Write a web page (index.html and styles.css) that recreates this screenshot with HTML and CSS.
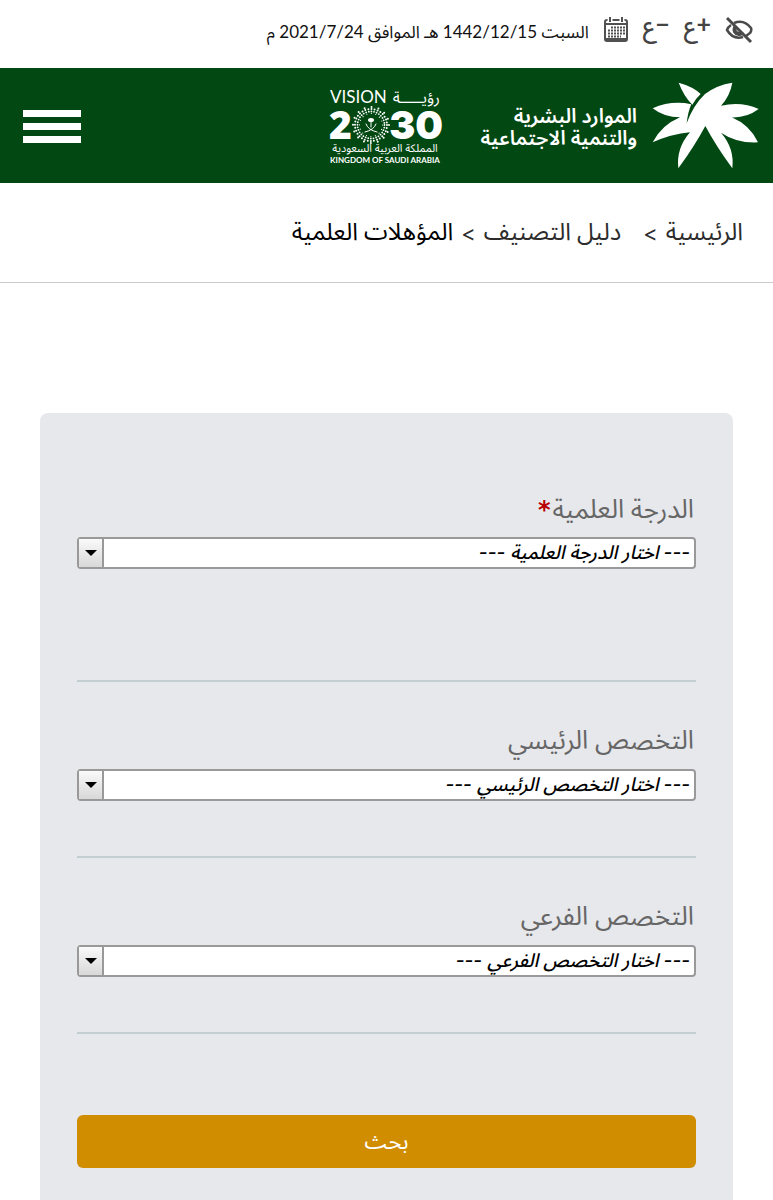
FILE: index.html
```html
<!DOCTYPE html>
<html lang="ar" dir="rtl">
<head>
<meta charset="utf-8">
<meta name="viewport" content="width=device-width, initial-scale=1">
<title>المؤهلات العلمية</title>
<link rel="stylesheet" href="styles.css">
</head>
<body>
<div class="topbar">
  <button class="tool" type="button" aria-label="وضع القراءة">
    <svg width="28" height="28" viewBox="0 0 28 28" fill="none" stroke="#4a4a4a" stroke-width="2.500">
      <path d="M9 7Q19 3 26 12Q27 14 25 17L21 20M6 9Q3 11 2 14Q8 24 18 21"/>
      <path d="M10 11Q8 17 14 18Q16 18 17 16" stroke-width="4"/>
      <path d="M2 2L26 26" stroke-width="3"/>
    </svg>
  </button>
  <button class="tool letter" type="button"><span>ع</span><sup>+</sup></button>
  <button class="tool letter" type="button"><span>ع</span><sup>−</sup></button>
  <button class="tool" type="button" aria-label="التقويم">
    <svg width="26" height="26" viewBox="0 0 26 26" fill="none" stroke="#505050">
      <rect x="2" y="3" width="22" height="21" rx="2" stroke-width="2"/>
      <path d="M2 7H24M2 22H24" stroke-width="2"/>
      <path d="M7 0V5M19 0V5" stroke="#fff" stroke-width="5"/>
      <path d="M7 0V5M19 0V5" stroke-width="2"/>
      <path d="M8 10.500H22M5 13.500H22M5 16.500H22M5 19.500H18" stroke-width="2" stroke-dasharray="2 1"/>
    </svg>
  </button>
  <span class="date">السبت 1442/12/15 هـ الموافق 2021/7/24 م</span>
</div>

<header class="header">
  <a class="ministry" href="#">
    <svg width="107" height="87" viewBox="576 36 321 261" fill="#fff" aria-hidden="true">
      <path d="M656 38Q700 50 722 72Q705 88 697 104Q672 80 656 38Z"/>
      <path d="M817 38Q810 78 783 107Q845 94 896 117Q860 144 815 142Q870 165 894 217Q830 220 783 188Q824 235 817 295Q768 228 736 168Q704 228 655 295Q648 235 690 187Q635 192 578 217Q605 165 660 142Q612 142 578 115Q635 90 694 103Q684 125 680 160Q700 105 735 72Q770 45 817 38Z"/>
    </svg>
    <span class="ministry-name">الموارد البشرية<br>والتنمية الاجتماعية</span>
  </a>
  <a class="vision" href="#">
    <svg width="116" height="96" viewBox="0 -8 116 96" fill="#fff" direction="ltr">
      <text class="v-thin" x="2" y="17">VISION</text>
      <text class="v-ar" x="112" y="17" text-anchor="end">رؤيـــــة</text>
      <text class="v-two" x="1" y="53">2</text>
      <text class="v-num" x="115" y="53" text-anchor="end">30</text>
      <g fill="none" stroke="#fff" stroke-linecap="round">
        <circle cx="43" cy="39" r="18" stroke-width="2" stroke-dasharray="0 7.069"/>
        <circle cx="43" cy="39" r="16" stroke-width="2" stroke-dasharray="0 3.142"/>
        <circle cx="43" cy="39" r="13.500" stroke-width="1.800" stroke-dasharray="0 2.651"/>
        <circle cx="43" cy="39" r="11.500" stroke-width="1.200" stroke-dasharray="0 4.516"/>
        <path d="M37 46Q46 44 48 38M49 46Q40 44 38 38" stroke-width="1"/>
        <path d="M43 41V34" stroke-width="1"/>
      </g>
      <ellipse cx="43" cy="34" rx="3" ry="2"/>
      <text class="v-sub-ar" x="57" y="66" text-anchor="middle">المملكة العربية السعودية</text>
      <text class="v-sub" x="57" y="77" text-anchor="middle">KINGDOM OF SAUDI ARABIA</text>
    </svg>
  </a>
  <button class="menu" type="button" aria-label="القائمة"><span></span><span></span><span></span></button>
</header>

<nav class="crumbs">
  <a href="#">الرئيسية</a><span class="sep wide">&gt;</span><a href="#">دليل التصنيف</a><span class="sep">&gt;</span><span class="current">المؤهلات العلمية</span>
</nav>

<main class="main">
  <form class="card">
    <div class="field tall">
      <label for="degree">الدرجة العلمية<span class="req">*</span></label>
      <div class="combo"><select id="degree"><option>--- اختار الدرجة العلمية ---</option></select><span class="arrow"></span></div>
    </div>
    <div class="field">
      <label for="major">التخصص الرئيسي</label>
      <div class="combo"><select id="major"><option>--- اختار التخصص الرئيسي ---</option></select><span class="arrow"></span></div>
    </div>
    <div class="field">
      <label for="minor">التخصص الفرعي</label>
      <div class="combo"><select id="minor"><option>--- اختار التخصص الفرعي ---</option></select><span class="arrow"></span></div>
    </div>
    <button class="search" type="button">بحث</button>
  </form>
</main>
</body>
</html>
```
FILE: styles.css
```css
* { box-sizing: border-box; }
body {
  margin: 0;
  background: #fff;
  color: #111;
  font-family: Lato, "Noto Sans Arabic", "DejaVu Sans", sans-serif;
}
button { font-family: inherit; border: 0; padding: 0; background: none; cursor: pointer; }
a { color: inherit; text-decoration: none; }
svg { display: block; }

.topbar {
  display: flex;
  align-items: center;
  gap: 14px;
  height: 68px;
  padding: 0 20px 8px;
}
.tool { color: #444; }
.letter { display: flex; direction: ltr; align-items: flex-start; height: 28px; }
.letter span { font-size: 24px; font-weight: 500; line-height: 20px; }
.letter sup { font-size: 25px; font-weight: 700; line-height: 14px; }
.date { font-size: 17px; line-height: 24px; padding-top: 4px; }

.header {
  display: flex;
  align-items: center;
  height: 115px;
  padding: 0 14px 0 23px;
  background: #014812;
  color: #fff;
}
.ministry { display: flex; align-items: center; gap: 15px; }
.ministry-name { font-size: 20px; font-weight: 600; line-height: 22px; white-space: nowrap; }
.vision { margin-right: 36px; }
.menu { display: grid; gap: 6px; width: 58px; margin-right: auto; padding-top: 2px; }
.menu span { height: 7px; background: #fff; }

.v-thin { font: 400 17px Lato, sans-serif; }
.v-ar { font: 16px "Noto Sans Arabic", "DejaVu Sans", sans-serif; }
.v-two { font: 800 39px "Open Sans", sans-serif; }
.v-num { font: 900 39px Inter, sans-serif; }
.v-sub-ar { font: 11px "Noto Sans Arabic", "DejaVu Sans", sans-serif; }
.v-sub { font: 700 8px Lato, sans-serif; }

.crumbs {
  display: flex;
  align-items: center;
  height: 100px;
  padding: 0 30px;
  border-bottom: 1px solid #ccc;
  font-size: 24px;
  color: #2c2c2c;
  white-space: nowrap;
}
.sep { margin: 0 8px; font-family: Inter, sans-serif; font-size: 22px; }
.sep.wide { margin-left: 22px; }
.current { color: #000; }

.main { padding: 130px 40px 0; }
.card {
  padding: 50px 37px 64px;
  border-radius: 8px;
  background: #e7e8ec;
}
.field {
  height: 176px;
  padding-top: 27px;
  border-bottom: 2px solid #c3ced3;
}
.field.tall { height: 219px; }
label { display: block; height: 60px; padding: 12px 2px 0; font-size: 26px; line-height: 36px; color: #666; }
.field.tall label { height: 47px; padding-top: 0; }
.req { color: #b80000; font-family: "DejaVu Sans", sans-serif; font-size: 24px; font-weight: 700; line-height: 24px; margin-right: 2px; }
.combo { position: relative; height: 32px; }
select {
  display: block;
  appearance: none;
  width: 100%;
  height: 32px;
  padding: 0 4px 0 30px;
  border: 2px solid #999;
  border-radius: 4px;
  background: #fff;
  color: #000;
  font: italic 500 19px/28px Inter, "Noto Sans Arabic", "DejaVu Sans", sans-serif;
}
.arrow {
  position: absolute;
  left: 2px;
  top: 2px;
  bottom: 2px;
  display: grid;
  place-items: center;
  width: 25px;
  border-right: 2px solid #999;
  background: linear-gradient(#fafafa, #d8d8d8);
  pointer-events: none;
}
.arrow::after {
  content: "";
  border: 6px solid transparent;
  border-top-color: #000;
  border-bottom: 0;
}
.search {
  display: block;
  width: 100%;
  height: 53px;
  margin-top: 81px;
  border-radius: 6px;
  background: #d08d00;
  color: #fff;
  font-size: 22px;
}
```
